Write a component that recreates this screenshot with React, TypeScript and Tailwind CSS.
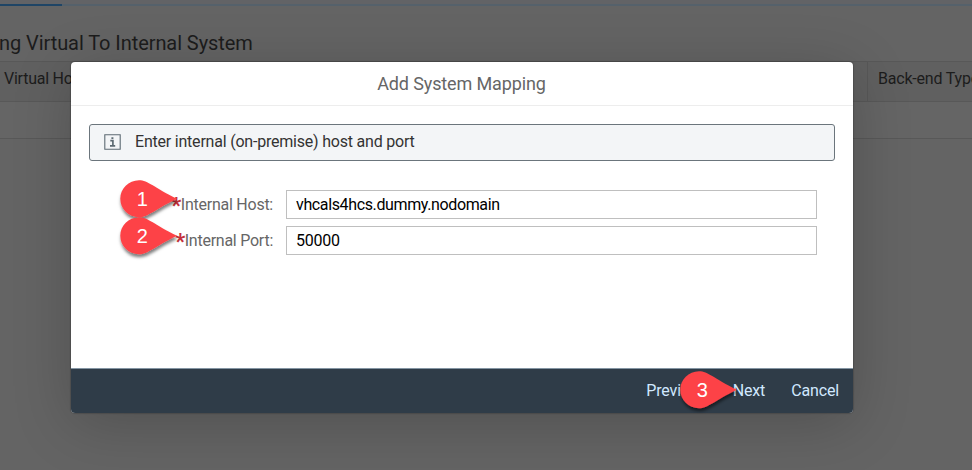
import React from "react";

function Marker({ label, className }: { label: string; className: string }) {
  return (
    <svg
      className={`absolute h-[52px] w-[68px] overflow-visible ${className}`}
      viewBox="0 0 68 52"
      aria-hidden="true"
    >
      <defs>
        <filter id={`shade-${label}`} x="-20%" y="-20%" width="140%" height="150%">
          <feDropShadow dx="0.5" dy="3" stdDeviation="1.8" floodColor="#000" floodOpacity="0.5" />
        </filter>
      </defs>
      <path
        d="M19 0.3C8.6 0.3 0.3 8.6 0.3 18.8S8.6 37.3 19 37.3C28 37.3 34 30 57 18.8C34 7.6 28 0.3 19 0.3Z"
        fill="#fd4246"
        filter={`url(#shade-${label})`}
      />
      <text x="22.3" y="26" textAnchor="middle" fill="#fff" fontSize="20" fontFamily="'Liberation Sans', Arial, sans-serif">
        {label}
      </text>
    </svg>
  );
}

function Field({ label, value, valueClass }: { label: string; value: string; valueClass: string }) {
  return (
    <div className="flex h-[29px] items-center">
      <label className="flex w-[202px] justify-end whitespace-nowrap text-[16px] text-[#666]">
        <span className="relative top-[2px] mr-[-0.5px] text-[22px] font-bold leading-[18px] text-[#c5303a]">*</span>
        <span className="leading-[20px] tracking-[-0.25px]">{label}</span>
      </label>
      <input
        readOnly
        value={value}
        className={`ml-[13px] h-[29px] w-[531px] border border-[#bfbfbf] bg-white pb-px pl-[9px] text-[16px] text-black outline-none ${valueClass}`}
      />
    </div>
  );
}

export default function App() {
  return (
    <div className="relative h-[470px] w-[972px] overflow-hidden bg-[#646464] font-[Roboto,sans-serif]">
      <div className="flex h-full flex-col text-[#1c1c1c]">
        <div className="h-[6px] border-b-2 border-[#55616b] bg-[#626366]">
          <div className="mt-[4px] h-[2px] w-[62px] bg-[#1f4566]" />
        </div>
        <div className="flex h-[55px] items-center pt-[19px]">
          <h1 className="-ml-px whitespace-nowrap text-[20px] leading-[24px] tracking-[-0.07px]">
            ng Virtual To Internal System
          </h1>
        </div>
        <div className="flex h-[41px] border-y border-[#585858] bg-[#606060] text-[16px] leading-[34px]">
          <div className="w-[868px] shrink-0 border-r border-[#585858] pl-[4px] tracking-[-0.25px]">Virtual Host</div>
          <div className="shrink-0 whitespace-nowrap pl-[10px] tracking-[-0.2px]">Back-end Type</div>
        </div>
        <div className="h-[37px] border-b border-[#585858] bg-[#656565]" />
      </div>

      <div className="absolute inset-0 pl-[71px] pt-[62px]">
        <section className="flex h-[351px] w-[782px] flex-col overflow-hidden rounded-[4px] bg-white shadow-[0_0_1px_1px_rgba(0,0,0,0.15),0_10px_60px_0_rgba(0,0,0,0.2)]">
          <header className="flex h-[44px] items-center justify-center border-b border-[#ededed] pr-px text-[18px] tracking-[-0.12px] text-[#666]">
            Add System Mapping
          </header>
          <div className="flex-1 pl-[18px] pt-[18px]">
            <div className="flex h-[37px] w-[746px] items-center rounded-[3px] border border-[#6b757c] bg-[#f3f5f7] pl-[14px]">
              <svg className="mb-px h-[16px] w-[17px]" viewBox="0 0 17 16" fill="none" stroke="#5d6a73">
                <path d="M.8 .8h15.4v14.4H.8z" strokeWidth="1.1" />
                <path d="M6.3 6.7h2.6v5M6 11.8h5.2M7.4 4.2h2" strokeWidth="1.7" />
              </svg>
              <span className="ml-[14px] pb-px text-[16px] tracking-[-0.21px] text-[#333]">
                Enter internal (on-premise) host and port
              </span>
            </div>
            <div className="-ml-[18px] mt-[29px] flex flex-col gap-[7px]">
              <Field label="Internal Host:" value="vhcals4hcs.dummy.nodomain" valueClass="tracking-[-0.37px]" />
              <Field label="Internal Port:" value="50000" valueClass="tracking-[-0.25px]" />
            </div>
          </div>
          <footer className="flex h-[45px] items-center justify-end gap-[26px] border-t border-[#8495a3] bg-[#2f3c48] pr-[14px] text-[16px] tracking-[-0.15px] text-[#d1e8ff]">
            <button>Previous</button>
            <button>Next</button>
            <button>Cancel</button>
          </footer>
        </section>
      </div>

      <Marker label="1" className="left-[120px] top-[180px]" />
      <Marker label="2" className="left-[120px] top-[217px]" />
      <Marker label="3" className="left-[680px] top-[371px]" />
    </div>
  );
}
